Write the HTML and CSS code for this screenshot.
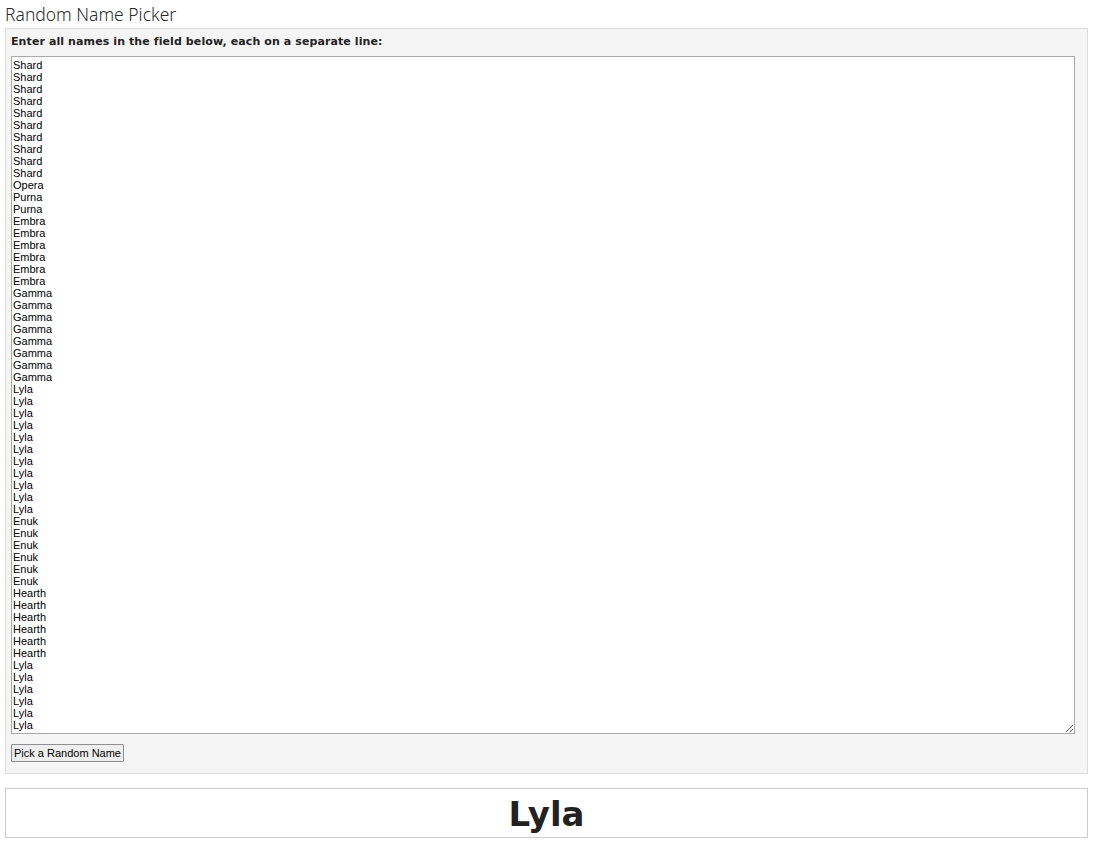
FILE: index.html
```html
<!DOCTYPE html>
<html lang="en">
<head>
    <meta charset="UTF-8">
    <title>Random Name Picker</title>
    <link rel="stylesheet" href="styles.css">
</head>
<body>

<h1 class="title">Random Name Picker</h1>

<div class="picker">
    <label for="names" class="picker-label">Enter all names in the field below, each on a separate line:</label>
    <textarea id="names" class="names" spellcheck="false">Shard
Shard
Shard
Shard
Shard
Shard
Shard
Shard
Shard
Shard
Opera
Purna
Purna
Embra
Embra
Embra
Embra
Embra
Embra
Gamma
Gamma
Gamma
Gamma
Gamma
Gamma
Gamma
Gamma
Lyla
Lyla
Lyla
Lyla
Lyla
Lyla
Lyla
Lyla
Lyla
Lyla
Lyla
Enuk
Enuk
Enuk
Enuk
Enuk
Enuk
Hearth
Hearth
Hearth
Hearth
Hearth
Hearth
Lyla
Lyla
Lyla
Lyla
Lyla
Lyla</textarea>
    <button class="pick-button" onclick="pickName()">Pick a Random Name</button>
</div>

<div class="result" id="result">Lyla</div>

<script>
    function pickName() {
        const names = document.getElementById('names').value
            .split('\n')
            .map(n => n.trim())
            .filter(n => n.length > 0);
        if (names.length === 0) return;
        const pick = names[Math.floor(Math.random() * names.length)];
        document.getElementById('result').textContent = pick;
    }
</script>

</body>
</html>
```

FILE: styles.css
```css
body {
    margin: 0;
    padding: 0 6px 0 5px;
    background-color: #ffffff;
    color: #222222;
    font-family: "DejaVu Sans", Verdana, sans-serif;
}

.title {
    margin: 0;
    padding-top: 3px;
    height: 25px;
    font-family: "Noto Sans", "Open Sans", sans-serif;
    font-weight: 300;
    font-size: 17.5px;
    line-height: 22px;
    color: #2a2a2a;
}

.picker {
    background-color: #f5f5f5;
    border: 1px solid #dddddd;
    padding: 5px 5px 11px 5px;
}

.picker-label {
    display: block;
    font-size: 11px;
    font-weight: bold;
    letter-spacing: 0.1px;
    line-height: 16px;
    margin-bottom: 6px;
}

.names {
    display: block;
    box-sizing: border-box;
    width: calc(100% - 7px);
    height: 678px;
    margin: 0;
    padding: 2px 1px;
    border: 1px solid #a9a9a9;
    background-color: #ffffff;
    color: #000000;
    font-family: "Liberation Sans", Arial, sans-serif;
    font-size: 11px;
    line-height: 12px;
    resize: both;
}

.pick-button {
    display: block;
    margin-top: 10px;
    height: 18px;
    padding: 0 2px;
    font-family: "Liberation Sans", Arial, sans-serif;
    font-size: 11px;
    color: #000000;
    background-color: #efefef;
    border: 1px solid #8f8f8f;
    border-radius: 1px;
    cursor: pointer;
}

.result {
    margin-top: 14px;
    height: 48px;
    border: 1px solid #cccccc;
    text-align: center;
    font-size: 34px;
    font-weight: bold;
    line-height: 50px;
    color: #222222;
}
```
